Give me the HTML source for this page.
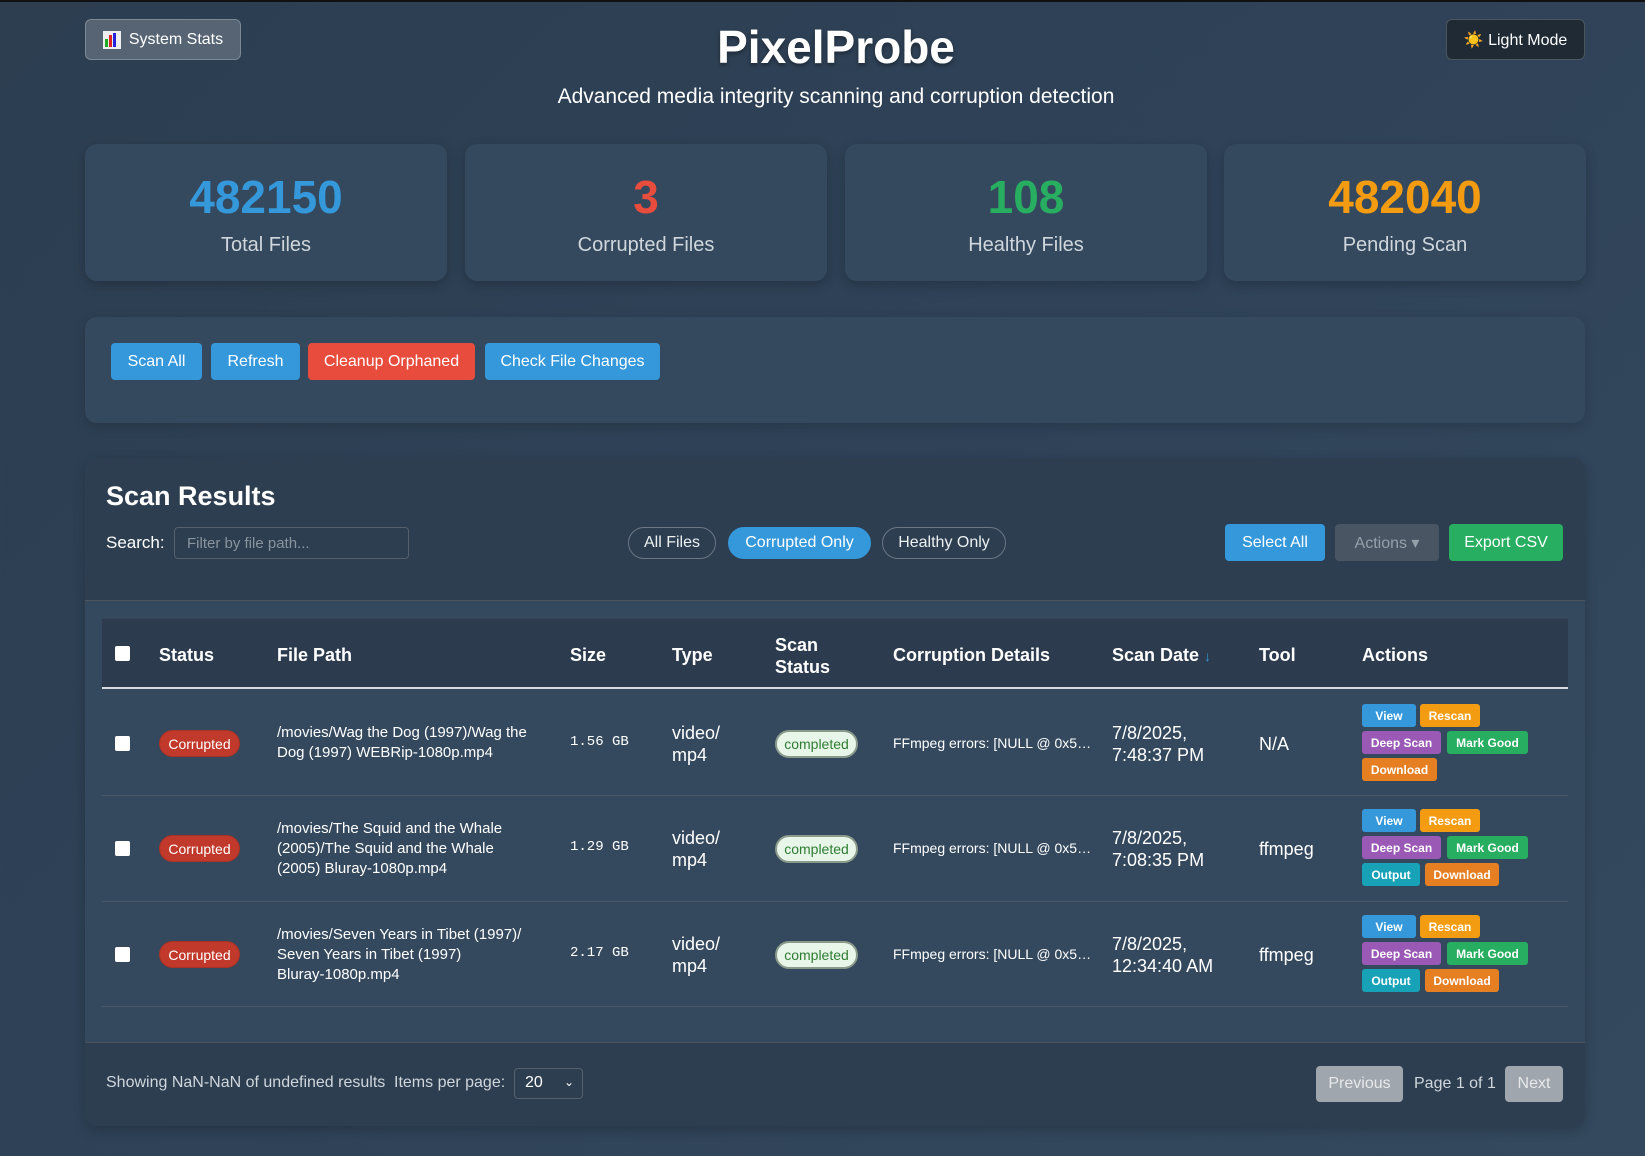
<!DOCTYPE html>
<html><head><meta charset="utf-8"><style>
*{box-sizing:border-box;margin:0;padding:0}
body{width:1645px;height:1156px;overflow:hidden;font-family:"Liberation Sans",sans-serif;color:#ecf0f1;background:linear-gradient(135deg,#2c3e50 0%,#2f4258 50%,#34495e 100%);position:relative;border-top:2px solid #111}
.a{position:absolute}
.wrap{position:absolute;left:0;top:-2px;width:1645px;height:1156px}
.btn{position:absolute;border-radius:4px;color:#fff;font-size:16px;display:flex;align-items:center;justify-content:center}
.card{position:absolute;top:144px;width:362px;height:137px;background:#34495e;border-radius:12px;box-shadow:0 4px 12px rgba(0,0,0,.2);text-align:center}
.card .n{font-size:46px;font-weight:bold;margin-top:27px;line-height:52px}
.card .l{font-size:20px;color:#cfd6dc;margin-top:11px}
.pill{position:absolute;top:527px;height:32px;border:1px solid #6b7785;border-radius:16px;font-size:16px;display:flex;align-items:center;justify-content:center;color:#ecf0f1}
.th{position:absolute;font-weight:bold;font-size:18px;color:#fff}
.cb{position:absolute;width:15px;height:15px;background:#fff;border-radius:2px}
.badge{position:absolute;width:81px;height:27px;background:#c0392b;border:1px solid #a93226;border-radius:14px;font-size:14px;color:#fff;display:flex;align-items:center;justify-content:center}
.comp{position:absolute;width:83px;height:28px;background:#e8f5e9;border:2px solid #8a9a8a;border-radius:14px;font-size:14px;color:#2e7d32;display:flex;align-items:center;justify-content:center}
.t{position:absolute;font-size:15px;line-height:20px;color:#fff}
.mono{position:absolute;font-family:"Liberation Mono",monospace;font-size:14px;color:#fff}
.big{position:absolute;font-size:18px;line-height:22px;color:#fff}
.sb{position:absolute;height:23px;border-radius:3px;font-size:12px;font-weight:bold;color:#fff;display:flex;align-items:center;justify-content:center}
.rl{position:absolute;left:102px;width:1466px;height:1px;background:#4a5868}
</style></head><body>
<div class="btn" style="left:85px;top:17px;width:156px;height:41px;background:#566474;border:1px solid #7d8895;border-radius:6px;font-size:16px"><span style="display:inline-flex;align-items:flex-end;gap:1px;height:18px;width:18px;background:#eee;padding:2px;margin-right:8px"><i style="width:3px;height:8px;background:#2a2"></i><i style="width:3px;height:12px;background:#d22"></i><i style="width:3px;height:14px;background:#22d"></i></span>System Stats</div>
<div class="a" style="left:0;width:1672px;top:18px;text-align:center;font-size:46px;font-weight:bold;color:#fff;text-shadow:0 2px 4px rgba(0,0,0,.4)">PixelProbe</div>
<div class="a" style="left:0;width:1672px;top:83px;text-align:center;font-size:21px;color:#fff">Advanced media integrity scanning and corruption detection</div>
<div class="btn" style="left:1446px;top:17px;width:139px;height:41px;background:#1f2a35;border:1px solid #4a5560;border-radius:6px;font-size:16px">☀️&nbsp;Light Mode</div>
<div class="wrap">
<div class="card" style="left:85px"><div class="n" style="color:#3498db">482150</div><div class="l">Total Files</div></div>
<div class="card" style="left:465px"><div class="n" style="color:#e74c3c">3</div><div class="l">Corrupted Files</div></div>
<div class="card" style="left:845px"><div class="n" style="color:#27ae60">108</div><div class="l">Healthy Files</div></div>
<div class="card" style="left:1224px"><div class="n" style="color:#f39c12">482040</div><div class="l">Pending Scan</div></div>

<div class="a" style="left:85px;top:317px;width:1500px;height:106px;background:#34495e;border-radius:12px;box-shadow:0 4px 12px rgba(0,0,0,.15)"></div>
<div class="btn" style="left:111px;top:343px;width:91px;height:37px;background:#3498db">Scan All</div>
<div class="btn" style="left:211px;top:343px;width:89px;height:37px;background:#3498db">Refresh</div>
<div class="btn" style="left:308px;top:343px;width:167px;height:37px;background:#e74c3c">Cleanup Orphaned</div>
<div class="btn" style="left:485px;top:343px;width:175px;height:37px;background:#3498db">Check File Changes</div>

<div class="a" style="left:85px;top:458px;width:1500px;height:668px;background:#34495e;border-radius:12px;overflow:hidden;box-shadow:0 4px 12px rgba(0,0,0,.2)">
 <div class="a" style="left:0;top:0;width:1500px;height:143px;background:#2d3e50;border-bottom:1px solid #4a5460"></div>
 <div class="a" style="left:0;top:584px;width:1500px;height:84px;background:#2d3e50;border-top:1px solid #4a5460"></div>
</div>
<div class="a" style="left:106px;top:481px;font-size:27px;font-weight:bold;color:#fff">Scan Results</div>
<div class="a" style="left:106px;top:533px;font-size:17px;color:#fff">Search:</div>
<div class="a" style="left:174px;top:527px;width:235px;height:32px;border:1px solid #55606c;border-radius:4px;background:#2c3e50;color:#8a949e;font-size:15px;padding:7px 12px">Filter by file path...</div>
<div class="pill" style="left:628px;width:88px">All Files</div>
<div class="pill" style="left:728px;width:143px;background:#3498db;border-color:#3498db;color:#fff">Corrupted Only</div>
<div class="pill" style="left:882px;width:124px">Healthy Only</div>
<div class="btn" style="left:1225px;top:524px;width:100px;height:37px;background:#3498db">Select All</div>
<div class="btn" style="left:1335px;top:524px;width:104px;height:37px;background:#4a5563;color:#95a0aa">Actions ▾</div>
<div class="btn" style="left:1449px;top:524px;width:114px;height:37px;background:#27ae60">Export CSV</div>

<div class="a" style="left:102px;top:619px;width:1466px;height:70px;background:#2c3b4e;border-bottom:2px solid #d8dde2"></div>
<div class="cb" style="left:115px;top:646px"></div>
<div class="th" style="left:159px;top:645px">Status</div>
<div class="th" style="left:277px;top:645px">File Path</div>
<div class="th" style="left:570px;top:645px">Size</div>
<div class="th" style="left:672px;top:645px">Type</div>
<div class="th" style="left:775px;top:634px;line-height:22px">Scan<br>Status</div>
<div class="th" style="left:893px;top:645px">Corruption Details</div>
<div class="th" style="left:1112px;top:645px">Scan Date <span style="color:#3498db;font-size:14px">↓</span></div>
<div class="th" style="left:1259px;top:645px">Tool</div>
<div class="th" style="left:1362px;top:645px">Actions</div>

<div class="cb" style="left:115px;top:736px"></div>
<div class="badge" style="left:159px;top:730px">Corrupted</div>
<div class="t" style="left:277px;top:723px">/movies/Wag the Dog (1997)/Wag the<br>Dog (1997) WEBRip-1080p.mp4</div>
<div class="mono" style="left:570px;top:734px">1.56 GB</div>
<div class="big" style="left:672px;top:722px">video/<br>mp4</div>
<div class="comp" style="left:775px;top:730px">completed</div>
<div class="t" style="left:893px;top:733px;font-size:14px">FFmpeg errors: [NULL @ 0x5…</div>
<div class="big" style="left:1112px;top:722px">7/8/2025,<br>7:48:37 PM</div>
<div class="big" style="left:1259px;top:733px">N/A</div>
<div class="sb" style="left:1362px;top:704px;width:54px;background:#3498db">View</div>
<div class="sb" style="left:1420px;top:704px;width:60px;background:#f39c12">Rescan</div>
<div class="sb" style="left:1362px;top:731px;width:79px;background:#9b59b6">Deep Scan</div>
<div class="sb" style="left:1447px;top:731px;width:81px;background:#27ae60">Mark Good</div>
<div class="sb" style="left:1362px;top:758px;width:75px;background:#e67e22">Download</div>
<div class="rl" style="top:795px"></div>

<div class="cb" style="left:115px;top:841px"></div>
<div class="badge" style="left:159px;top:835px">Corrupted</div>
<div class="t" style="left:277px;top:819px">/movies/The Squid and the Whale<br>(2005)/The Squid and the Whale<br>(2005) Bluray-1080p.mp4</div>
<div class="mono" style="left:570px;top:839px">1.29 GB</div>
<div class="big" style="left:672px;top:827px">video/<br>mp4</div>
<div class="comp" style="left:775px;top:835px">completed</div>
<div class="t" style="left:893px;top:838px;font-size:14px">FFmpeg errors: [NULL @ 0x5…</div>
<div class="big" style="left:1112px;top:827px">7/8/2025,<br>7:08:35 PM</div>
<div class="big" style="left:1259px;top:838px">ffmpeg</div>
<div class="sb" style="left:1362px;top:809px;width:54px;background:#3498db">View</div>
<div class="sb" style="left:1420px;top:809px;width:60px;background:#f39c12">Rescan</div>
<div class="sb" style="left:1362px;top:836px;width:79px;background:#9b59b6">Deep Scan</div>
<div class="sb" style="left:1447px;top:836px;width:81px;background:#27ae60">Mark Good</div>
<div class="sb" style="left:1362px;top:863px;width:58px;background:#17a2b8">Output</div>
<div class="sb" style="left:1425px;top:863px;width:74px;background:#e67e22">Download</div>
<div class="rl" style="top:901px"></div>

<div class="cb" style="left:115px;top:947px"></div>
<div class="badge" style="left:159px;top:941px">Corrupted</div>
<div class="t" style="left:277px;top:925px">/movies/Seven Years in Tibet (1997)/<br>Seven Years in Tibet (1997)<br>Bluray-1080p.mp4</div>
<div class="mono" style="left:570px;top:945px">2.17 GB</div>
<div class="big" style="left:672px;top:933px">video/<br>mp4</div>
<div class="comp" style="left:775px;top:941px">completed</div>
<div class="t" style="left:893px;top:944px;font-size:14px">FFmpeg errors: [NULL @ 0x5…</div>
<div class="big" style="left:1112px;top:933px">7/8/2025,<br>12:34:40 AM</div>
<div class="big" style="left:1259px;top:944px">ffmpeg</div>
<div class="sb" style="left:1362px;top:915px;width:54px;background:#3498db">View</div>
<div class="sb" style="left:1420px;top:915px;width:60px;background:#f39c12">Rescan</div>
<div class="sb" style="left:1362px;top:942px;width:79px;background:#9b59b6">Deep Scan</div>
<div class="sb" style="left:1447px;top:942px;width:81px;background:#27ae60">Mark Good</div>
<div class="sb" style="left:1362px;top:969px;width:58px;background:#17a2b8">Output</div>
<div class="sb" style="left:1425px;top:969px;width:74px;background:#e67e22">Download</div>
<div class="rl" style="top:1006px"></div>

<div class="a" style="left:106px;top:1074px;font-size:16px;color:#cfd6dc">Showing NaN-NaN of undefined results</div>
<div class="a" style="left:394px;top:1074px;font-size:16px;color:#cfd6dc">Items per page:</div>
<div class="a" style="left:514px;top:1068px;width:69px;height:31px;border:1px solid #55606c;border-radius:4px;background:#2c3e50;font-size:16px;color:#fff;padding:5px 10px">20<span style="position:absolute;right:8px;top:6px;font-size:12px">⌄</span></div>
<div class="btn" style="left:1316px;top:1066px;width:87px;height:36px;background:#a0a6ad;color:#e6e8ea">Previous</div>
<div class="a" style="left:1414px;top:1075px;font-size:16px;color:#cfd6dc">Page 1 of 1</div>
<div class="btn" style="left:1505px;top:1066px;width:58px;height:36px;background:#a0a6ad;color:#e6e8ea">Next</div>
</div>
</body></html>
